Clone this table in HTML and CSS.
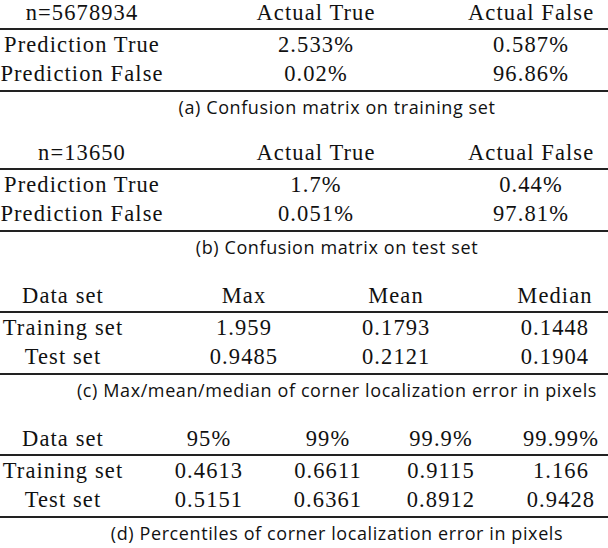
FILE: index.html
```html
<!DOCTYPE html>
<html lang="en">
<head>
<meta charset="utf-8">
<title>Tables</title>
<link rel="stylesheet" href="styles.css">
</head>
<body>
<main class="page">
  <section class="block">
    <div class="row head cols-a"><span>n=5678934</span><span>Actual True</span><span>Actual False</span></div>
    <div class="row cols-a"><span>Prediction True</span><span>2.533%</span><span>0.587%</span></div>
    <div class="row last cols-a"><span>Prediction False</span><span>0.02%</span><span>96.86%</span></div>
    <p class="caption">(a) Confusion matrix on training set</p>
  </section>
  <section class="block">
    <div class="row head cols-a"><span>n=13650</span><span>Actual True</span><span>Actual False</span></div>
    <div class="row cols-a"><span>Prediction True</span><span>1.7%</span><span>0.44%</span></div>
    <div class="row last cols-a"><span>Prediction False</span><span>0.051%</span><span>97.81%</span></div>
    <p class="caption">(b) Confusion matrix on test set</p>
  </section>
  <section class="block">
    <div class="row head cols-c"><span>Data set</span><span>Max</span><span>Mean</span><span class="far">Median</span></div>
    <div class="row cols-c"><span>Training set</span><span>1.959</span><span>0.1793</span><span class="far">0.1448</span></div>
    <div class="row last cols-c"><span>Test set</span><span>0.9485</span><span>0.2121</span><span class="far">0.1904</span></div>
    <p class="caption">(c) Max/mean/median of corner localization error in pixels</p>
  </section>
  <section class="block">
    <div class="row head cols-d"><span>Data set</span><span>95%</span><span>99%</span><span>99.9%</span><span>99.99%</span></div>
    <div class="row cols-d"><span>Training set</span><span>0.4613</span><span>0.6611</span><span>0.9115</span><span>1.166</span></div>
    <div class="row last cols-d"><span>Test set</span><span>0.5151</span><span>0.6361</span><span>0.8912</span><span>0.9428</span></div>
    <p class="caption">(d) Percentiles of corner localization error in pixels</p>
  </section>
</main>
</body>
</html>
```

FILE: styles.css
```css
html, body {
  margin: 0;
  padding: 0;
  background: #ffffff;
}

.page {
  width: 608px;
  display: flex;
  flex-direction: column;
  gap: 24px;
  color: #111111;
}

.block:first-child {
  margin-bottom: -3px;
}

.row {
  display: grid;
  font-family: "Liberation Serif", "Times New Roman", serif;
  font-size: 22.5px;
  letter-spacing: 1.1px;
  line-height: 29px;
  text-align: center;
  white-space: nowrap;
}

.row.head {
  line-height: 25px;
  padding-bottom: 3px;
  border-bottom: 2px solid #222222;
}

.row.last {
  padding-bottom: 2px;
  border-bottom: 2px solid #222222;
}

.cols-a {
  grid-template-columns: 164px 304px 126px 1fr;
}

.cols-c {
  grid-template-columns: 126px 236px 68px 72px 106px;
}

.cols-c .far {
  grid-column: 5;
}

.cols-d {
  grid-template-columns: 126px 166px 72px 154px 86px 1fr;
}

.caption {
  margin: 3px 0 0;
  padding-left: 66px;
  font-family: "Open Sans", Lato, sans-serif;
  font-size: 18px;
  letter-spacing: 0.6px;
  line-height: 24px;
  text-align: center;
  white-space: nowrap;
  color: #111111;
}
```
